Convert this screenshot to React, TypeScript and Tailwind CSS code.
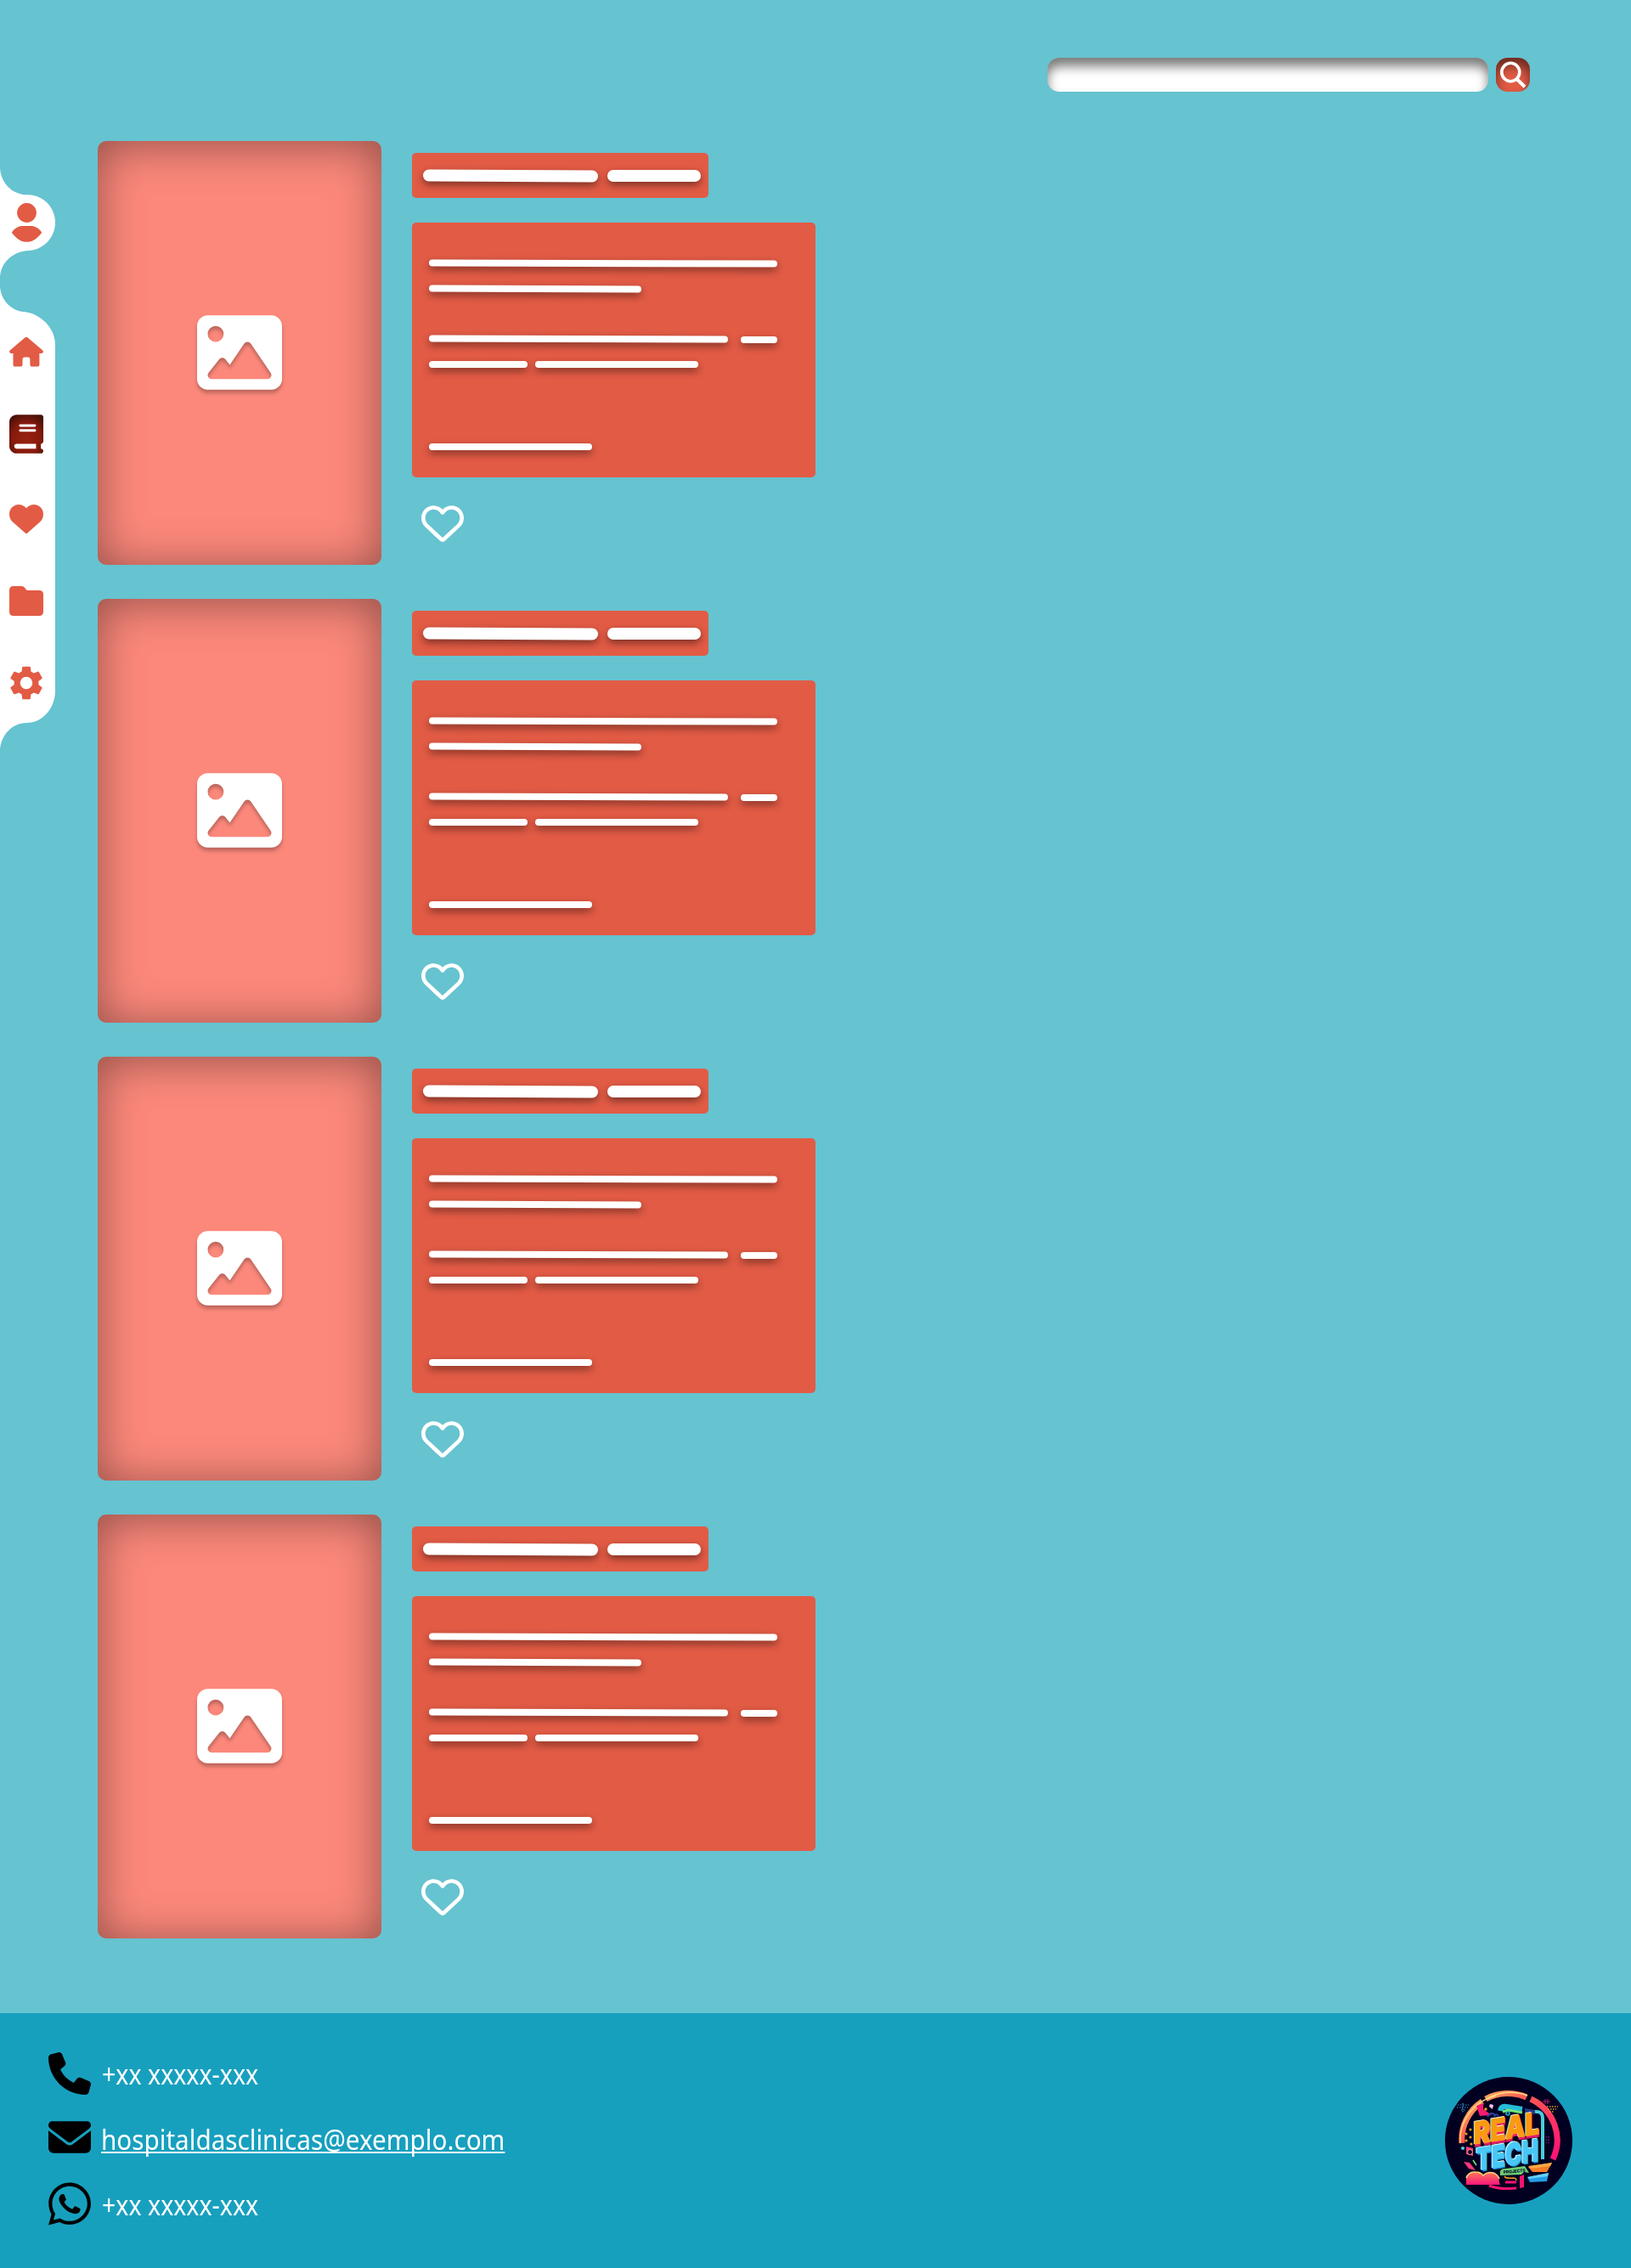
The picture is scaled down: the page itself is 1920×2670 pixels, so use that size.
import React from "react";
import { FaBook, FaEnvelope, FaImage, FaPhone, FaRegHeart, FaWhatsapp } from "react-icons/fa6";
import { MdSettings } from "react-icons/md";

function Bar({ className }: { className: string }) {
  return <div className={`rounded-full bg-white shadow-[0_4px_10px_rgba(0,0,0,0.45)] ${className}`} />;
}

function Sidebar() {
  return (
    <aside className="relative mt-8 h-[688px] w-[66px] shrink-0 text-[#e25b45]">
      <svg className="absolute inset-0" width="66" height="688" viewBox="0 0 66 688" fill="#fff">
        <path d="M0 0C1 17 14 31.300 32 31.300C51 31.300 65 46 65 64S51 96 34 97C14 98 0 112 0 130V138C0 155 14 169 30 169.300C48 172 65 188 65 208V615C65 635 51 653 31 653C14 653 0 668 0 687Z" />
      </svg>
      <nav className="relative flex w-[62.5px] flex-col items-center">
        <svg className="mt-[41px]" width="35" height="46" viewBox="0 0 35 46" fill="currentColor">
          <circle cx="17.5" cy="11.500" r="11.400" />
          <path d="M0.300 34Q-.2 34.700.3 35.400C6 42.500 11 45.700 17.500 45.700S29 42.500 34.700 35.400Q35.200 34.700 34.700 34C30.500 28.500 26 27 22 27H13C9 27 4.500 28.500.3 34Z" />
        </svg>
        <svg className="mt-[111px]" width="40" height="36" viewBox="0 0 40 36" fill="currentColor">
          <path d="M18.600 1.300Q20 .1 21.400 1.300L39.300 16.500Q40.200 17.600 39.700 18.800Q39.200 19.900 38 19.900H35.400V33Q35.400 35.600 32.800 35.600H27Q24.400 35.600 24.400 33V27Q24.400 24.600 22 24.600H18Q15.500 24.600 15.500 27V33Q15.500 35.600 12.900 35.600H7Q4.500 35.600 4.500 33V19.900H2Q.8 19.900.3 18.800Q-.2 17.600.7 16.500Z" />
        </svg>
        <svg className="mt-[56px]" width="0" height="0">
          <radialGradient id="book" cx="50%" cy="62%" r="68%">
            <stop offset="0" stopColor="#98210f" />
            <stop offset="0.6" stopColor="#861a0d" />
            <stop offset="1" stopColor="#481007" />
          </radialGradient>
        </svg>
        <FaBook className="h-[46px] w-[40px] [&_path]:fill-[url(#book)]" />
        <svg className="mt-[60px]" width="40" height="34" viewBox="0 0 40 34" fill="currentColor">
          <path d="M20 4.300C22.300 1.600 25.400 0 29 0C35.200 0 40 5 40 11.200C40 15 38.500 18.200 36 20.500L21.300 33.400Q20 34.500 18.700 33.400L4 20.500C1.500 18.200 0 15 0 11.200C0 5 4.800 0 11 0C14.600 0 17.700 1.600 20 4.300Z" />
        </svg>
        <svg className="mt-[62px] -ml-px" width="40" height="35" viewBox="0 0 40 35" fill="currentColor">
          <path d="M5 0H14.500Q16.500 0 17.800 1.600L20 4.300Q20.700 5 22 5H35Q40 5 40 10V30Q40 35 35 35H5Q0 35 0 30V5Q0 0 5 0Z" />
        </svg>
        <MdSettings className="mt-[55px] size-12" />
      </nav>
    </aside>
  );
}

function Entry() {
  return (
    <article className="flex h-[499px]">
      <div className="flex w-[334px] items-center justify-center rounded-[10px] bg-[#fc887b] shadow-[inset_0_4px_54px_rgba(0,0,0,0.42)]">
        <FaImage className="mb-px size-[100px] text-white drop-shadow-[0_4px_2px_rgba(0,0,0,0.25)]" />
      </div>
      <div className="ml-9 pt-3.5">
        <div className="flex h-[53px] w-[349px] gap-[11px] rounded-[5px] bg-[#e25b45] pt-5 pl-[13px]">
          <Bar className="-mt-[0.5px] h-3.5 w-[206px] rotate-[0.27deg]" />
          <Bar className="h-3.5 w-[110px]" />
        </div>
        <div className="mt-[29px] h-[300px] w-[475px] rounded-[5px] bg-[#e25b45] pt-[44.4px] pl-5">
          <Bar className="h-2 w-[410px] rotate-[0.14deg]" />
          <Bar className="mt-[22px] h-2 w-[250px] rotate-[0.23deg]" />
          <div className="mt-[51px] flex gap-[15px]">
            <Bar className="h-2 w-[352px] rotate-[0.16deg]" />
            <Bar className="mt-[0.5px] h-2 w-[43px]" />
          </div>
          <div className="mt-[21px] flex gap-[9px]">
            <Bar className="h-2 w-[116px]" />
            <Bar className="h-2 w-[192px]" />
          </div>
          <Bar className="mt-[89px] h-2 w-[192px]" />
        </div>
        <FaRegHeart className="mt-[29px] ml-[11px] size-[50px] text-white" />
      </div>
    </article>
  );
}

function Logo() {
  return (
    <svg width="150" height="150" viewBox="0 0 150 150" fill="none">
      <defs>
        <linearGradient id="ring" x1="0" y1="0" x2="1" y2="1">
          <stop offset="0" stopColor="#ffd06a" />
          <stop offset="0.35" stopColor="#ff5a50" />
          <stop offset="1" stopColor="#ff0f78" />
        </linearGradient>
        <linearGradient id="cloud" x1="0" y1="0" x2="0" y2="1">
          <stop offset="0" stopColor="#ff7a58" />
          <stop offset="1" stopColor="#f5157c" />
        </linearGradient>
      </defs>
      <circle cx="75" cy="75" r="75" fill="#020020" />
      <path d="M20 78A56 54 0 0 1 44 29M48 26A55 54 0 0 1 96 24M101 26A56 54 0 0 1 127 97" stroke="url(#ring)" strokeWidth="7" />
      <path d="M18 78A56 54 0 0 1 60 22" stroke="#ffdb7a" strokeWidth="1.500" />
      <path d="M49 26A55 54 0 0 1 97 22" stroke="#ffe088" strokeWidth="1.500" />
      <path d="M37 34L45 31V38L55 45L41 46Z" fill="#f51a70" />
      <path d="M53 32L57 33L56 38L52 35Z" fill="#f3c7e8" />
      <circle cx="48" cy="38" r="1.700" fill="#ff9a22" />
      <path d="M50 47Q54 40 59 45M58 47Q60 42 63 46" stroke="#2746a5" strokeWidth="2" />
      <path d="M65 40Q66 34 72 35L91 38" stroke="#24bdd8" strokeWidth="6" />
      <path d="M68 41L74 39L91 42" stroke="#75e57c" strokeWidth="3" />
      <circle cx="74" cy="43" r="2" stroke="#21b6d2" strokeWidth="1.500" />
      <path d="M94 37L106 39V44L94 42Z" fill="#223a87" />
      <path d="M106 41Q115 40 115 49V97" stroke="#49cdda" strokeWidth="4" />
      <g fill="#f29b20">
        <circle cx="30" cy="62" r="1.600" /><circle cx="25" cy="67" r="1.600" /><circle cx="30" cy="71" r="1.600" />
        <circle cx="25" cy="75" r="1.600" /><circle cx="31" cy="79" r="1.600" />
      </g>
      <circle cx="21" cy="84" r="2" fill="#54c6e4" />
      <path d="M25 82L33 84V93L25 91ZM22 100L29 101L36 110L28 108Z" fill="#f8367a" />
      <circle cx="29.500" cy="88.500" r="3" fill="#150527" stroke="#ffa19c" />
      <path d="M33 98L37 104" stroke="#75e57c" strokeWidth="1.500" />
      <g fontFamily="Inter, sans-serif" fontWeight="900">
        <g transform="matrix(1 -.16 0 1 0 0)" fontSize="36">
          <text x="34" y="87.500" textLength="77" lengthAdjust="spacingAndGlyphs" fill="#e61b68" stroke="#e61b68" strokeWidth="1.500">REAL</text>
          <text x="33" y="84" textLength="77" lengthAdjust="spacingAndGlyphs" fill="#fff0ca" stroke="#fff0ca">REAL</text>
          <text x="34" y="85" textLength="77" lengthAdjust="spacingAndGlyphs" fill="#f99a12" stroke="#f99a12">REAL</text>
          <text x="37" y="118.500" textLength="73" lengthAdjust="spacingAndGlyphs" fill="#168bd1" stroke="#020020" strokeWidth="5">TECH</text>
          <text x="38" y="118.500" textLength="73" lengthAdjust="spacingAndGlyphs" fill="#168bd1">TECH</text>
          <text x="36" y="115.500" textLength="73" lengthAdjust="spacingAndGlyphs" fill="#d6fbff" stroke="#d6fbff">TECH</text>
          <text x="37" y="116.500" textLength="73" lengthAdjust="spacingAndGlyphs" fill="#48c8f6" stroke="#48c8f6">TECH</text>
        </g>
      </g>
      <path d="M65 111Q66 108 71 108L94 105L99 113L93 112L90 115L65 116Z" fill="#6dce75" />
      <text x="69" y="114" transform="rotate(-5 69 114)" textLength="26" fontFamily="Inter, sans-serif" fontWeight="800" fontSize="5" fill="#06122b">PROJECTS</text>
      <path d="M25 127V119Q28 111 36 112Q42 112 45 116Q50 111 57 113Q64 116 64 124L65 127Z" fill="url(#cloud)" />
      <path d="M25 119Q28 111 36 112Q42 112 45 116Q50 111 57 113Q62 115 64 120" stroke="#ffd578" strokeWidth="1.500" />
      <path d="M52 128Q64 133 84 131M71 124H84" stroke="#f4146f" strokeWidth="3" />
      <path d="M88 117L93 115V130L88 131Z" fill="#f4146f" />
      <path d="M70 117Q72 120 80 119Q84 119 84 122" stroke="#f09c22" strokeWidth="1.500" />
      <path d="M98 106L126 101L120 112L103 112Z" fill="#f77c25" />
      <path d="M98 105L126 101L124 105L101 108Z" fill="#ffa943" />
      <path d="M97 118L122 113L120 123L100 124Z" fill="#249ce6" />
      <path d="M97 118L122 113L121 117L99 120Z" fill="#63d1fa" />
      <path d="M12 33H28M14 36H27M19 39H24M21 31V42" stroke="#309ed0" strokeWidth="1.200" strokeDasharray="1.500 1.500" />
      <path d="M120 35H133M121 38H131M123 41H129" stroke="#dca62c" strokeWidth="1.500" strokeDasharray="1.500 1.500" />
      <path d="M115 29H124M118 26V32M121 26V32" stroke="#a51c5f" strokeWidth="1.200" />
      <path d="M119 70V78M122 70V78" stroke="#9f1c68" strokeWidth="1.300" strokeDasharray="1.500 2" />
    </svg>
  );
}

export default function App() {
  return (
    <div className="flex h-[2670px] w-[1920px] flex-col overflow-hidden bg-[#66c3d0]">
      <header className="flex h-[166px] shrink-0 justify-end gap-[9px] pt-[68px] pr-[119px]">
        <input aria-label="Pesquisar" className="h-10 w-[519px] rounded-[14px] bg-white px-4 shadow-[inset_0_10px_13px_rgba(0,0,0,0.52)] outline-none" />
        <button aria-label="Buscar" className="size-10 rounded-[14px] bg-[#e25b45] pl-1 shadow-[inset_0_10px_13px_rgba(0,0,0,0.52)]">
          <svg width="33" height="32" viewBox="0 0 33 32" fill="none" stroke="#fff" strokeWidth="3.600">
            <ellipse cx="13.300" cy="13" rx="10.500" ry="10.700" />
            <path d="M20.500 21L30 30.300" strokeWidth="4" />
          </svg>
        </button>
      </header>
      <main className="flex flex-1 items-start">
        <Sidebar />
        <div className="ml-[49px] flex flex-col gap-10">
          <Entry />
          <Entry />
          <Entry />
          <Entry />
        </div>
      </main>
      <footer className="flex h-[300px] shrink-0 items-center justify-between bg-[#17a0be] pr-[69px] pl-[57px]">
        <address className="flex h-full flex-col pt-[42px] font-['Noto_Sans'] text-[32px] leading-[40px] text-white not-italic">
          <div className="flex h-[77px] gap-[13px]">
            <FaPhone className="mt-1 size-[50px] text-black" />
            <span className="w-[190px] origin-left scale-x-[0.893] pt-[10px] whitespace-nowrap">+xx xxxxx-xxx</span>
          </div>
          <div className="flex h-[77px] gap-3">
            <FaEnvelope className="mt-[2px] size-[50px] text-black" />
            <a className="h-10 origin-left scale-x-[0.9273] pt-[10px] whitespace-nowrap underline decoration-2 underline-offset-2 [text-decoration-skip-ink:none]">
              hospitaldasclinicas@exemplo.com
            </a>
          </div>
          <div className="flex h-[77px] gap-[13px]">
            <FaWhatsapp className="h-[57px] w-[50px] text-black" />
            <span className="w-[190px] origin-left scale-x-[0.893] pt-[10px] whitespace-nowrap">+xx xxxxx-xxx</span>
          </div>
        </address>
        <Logo />
      </footer>
    </div>
  );
}
